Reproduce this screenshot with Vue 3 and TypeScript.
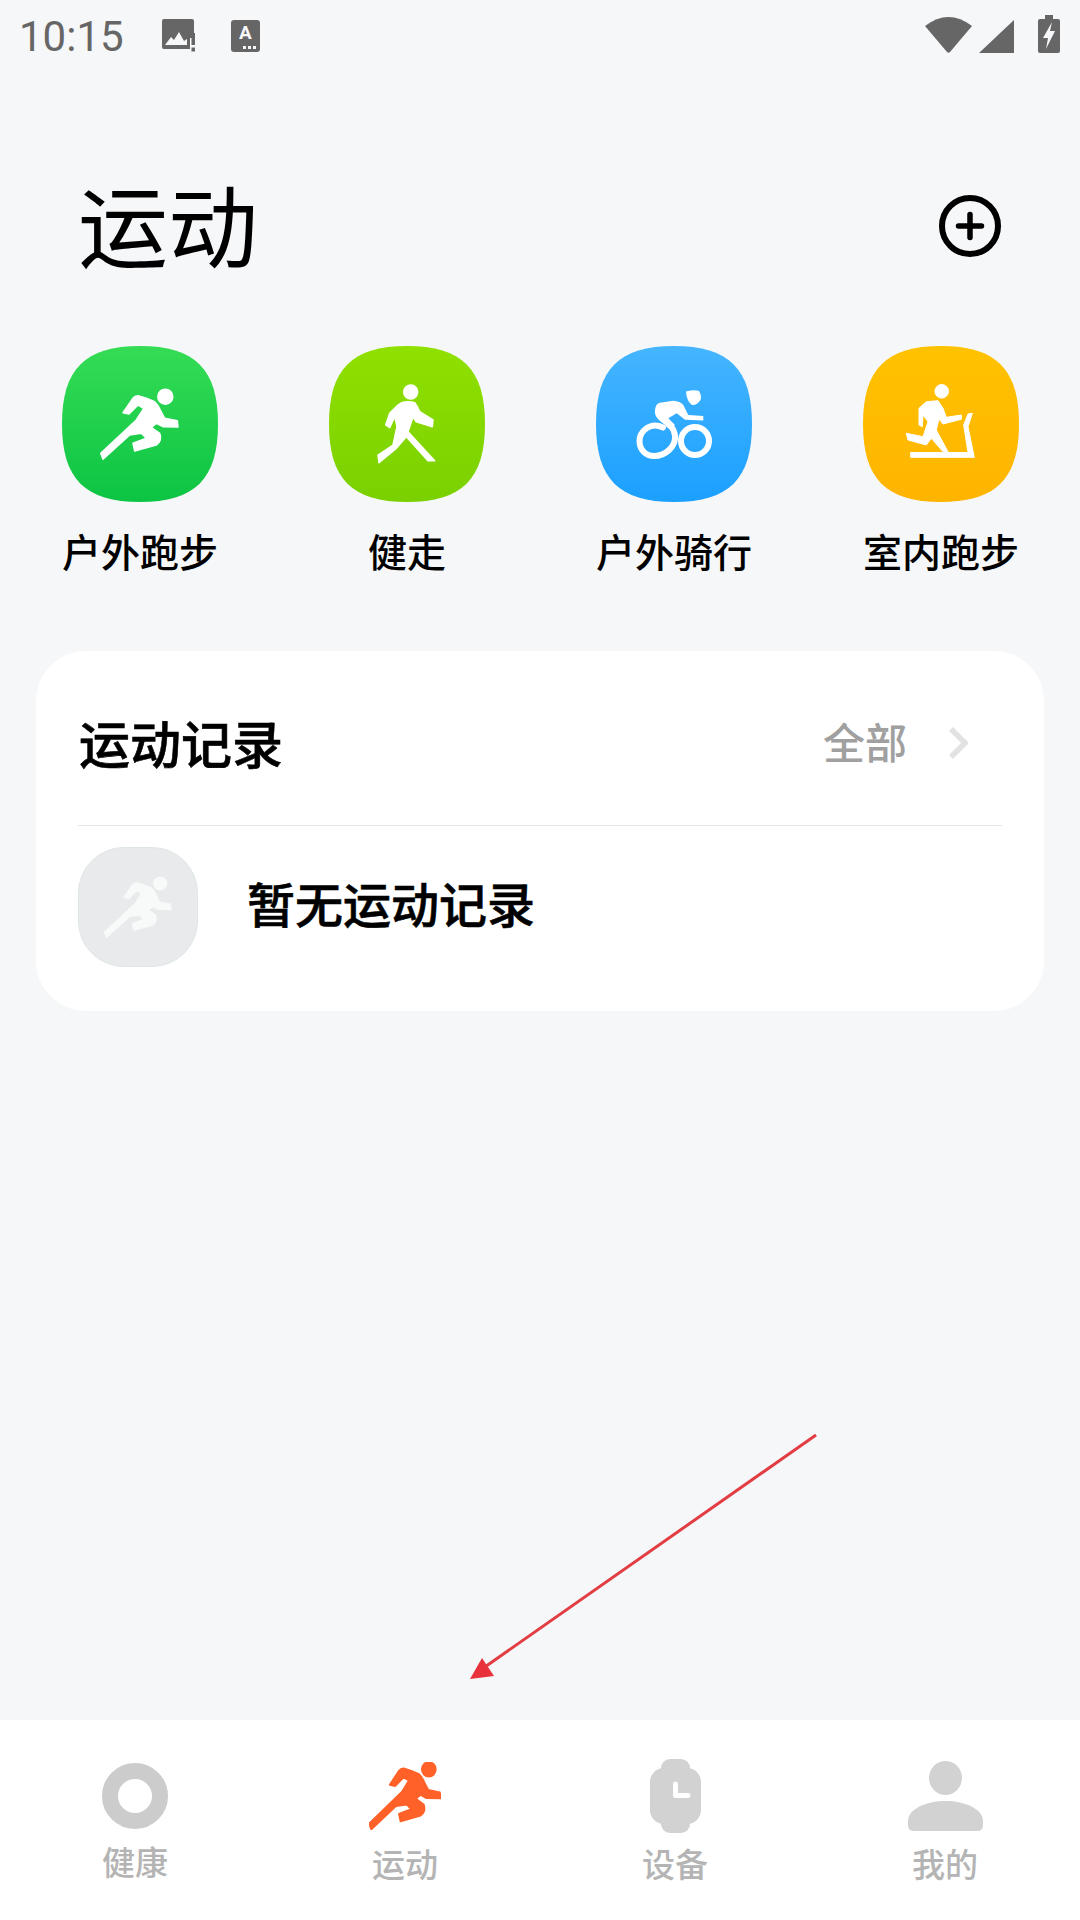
<script setup lang="ts">
interface Shape {
  name: string
  from: string
  to: string
  art: string
}

// Runner outline, drawn in the 156px tile's coordinates
const runner =
  'M61 66.7 71 52.3Q73 49.5 76 49.7L84.3 52.3 92.7 55.7Q96.5 59 98.3 64L102.7 72.3 115.3 74.7 116 81 101 80.7 94.3 77.3 89.3 81.3 97.7 87.3Q99 90 98.3 94 97 97.5 94.3 99L72.7 105 71 97.3 84.3 92.3 79.3 87.3 67.7 89 41 113.3 38.7 107.3 74.3 74 81.7 62.3 76 59 67 68Z'
const runnerHead = { cx: 103.3, cy: 50.7, r: 7.5 }

const sports: Shape[] = [
  { name: '户外跑步', from: '#35dc55', to: '#0cc443', art: 'run' },
  { name: '健走', from: '#90e000', to: '#7ad000', art: 'walk' },
  { name: '户外骑行', from: '#45b5ff', to: '#1ba0ff', art: 'bike' },
  { name: '室内跑步', from: '#ffc200', to: '#ffb400', art: 'tread' }
]

const tileShape = 'M78 0C133 0 156 23 156 78 156 133 133 156 78 156 23 156 0 133 0 78 0 23 23 0 78 0Z'
</script>

<template>
  <div class="page">
    <div class="status">
      <span class="time">10:15</span>
      <svg class="st-image" viewBox="0 0 34 34" width="34" height="34">
        <path d="M2 0H30Q32 0 32 2V19H28V30H2Q0 30 0 28V2Q0 0 2 0Z" fill="#666" />
        <path d="M3 26 9 18 12 21 17 13 22 22 25 20V26Z" fill="#f6f7f9" />
        <rect x="29.5" y="14" width="3.5" height="12" fill="#666" />
        <rect x="29.5" y="28.5" width="3.5" height="4" fill="#666" />
      </svg>
      <div class="st-letter">
        <span>A</span>
        <i></i>
      </div>
      <div class="status-right">
        <svg viewBox="0 0 47 36" width="47" height="36">
          <path d="M0 9Q23.500-9 47 9L25 35Q23.500 36.500 22 35Z" fill="#666" />
        </svg>
        <svg viewBox="0 0 35 33" width="35" height="33">
          <path d="M35 0V33H0Z" fill="#666" />
        </svg>
        <svg viewBox="0 0 22 38" width="22" height="38">
          <path d="M7 0H15V4H20Q22 4 22 6V36Q22 38 20 38H2Q0 38 0 36V6Q0 4 2 4H7Z" fill="#666" />
          <path d="M14 7 5 23H10L8 34 17 16H12Z" fill="#f6f7f9" />
        </svg>
      </div>
    </div>

    <header class="head">
      <h1>运动</h1>
      <svg class="plus" viewBox="0 0 62 62" width="62" height="62">
        <circle cx="31" cy="31" r="28" fill="none" stroke="#000" stroke-width="6" />
        <path d="M31 19.500V42.500M19.500 31H42.500" fill="none" stroke="#000" stroke-width="5.500" stroke-linecap="round" />
      </svg>
    </header>

    <section class="sports">
      <div v-for="(s, i) in sports" :key="s.name" class="sport">
        <svg viewBox="0 0 156 156" width="156" height="156">
          <defs>
            <linearGradient :id="`tile${i}`" x1="0" y1="0" x2="0" y2="1">
              <stop offset="0" :stop-color="s.from" />
              <stop offset="1" :stop-color="s.to" />
            </linearGradient>
          </defs>
          <path :d="tileShape" :fill="`url(#tile${i})`" />
          <g v-if="s.art === 'run'" class="fat">
            <path :d="runner" />
            <circle v-bind="runnerHead" />
          </g>
          <g v-else-if="s.art === 'walk'" class="fat">
            <circle cx="81.700" cy="46" r="7" />
            <path d="M60.700 67.300 69 59Q73 55.700 77.300 55.700 83 55.500 85.700 56.700 88.500 60 90.700 65.700L104 74 103.300 80.700 87.300 75.700 84 71 79 85.700 105.700 114.700 99 114.700 77.300 90.700 67.300 102.300 50 116.700 49 109 64 99 68 80.700 65.700 70.700 60.700 81.700 56.700 79Z" />
          </g>
          <g v-else-if="s.art === 'bike'">
            <path d="M90 45.500Q98 43.500 103 45 106 50 104.500 54 101 59.500 96 59 90.500 55 90 45.500Z" fill="#fff" />
            <path d="M59 64Q59.500 57.700 64 56.700L77.300 54.700Q84 55 87.300 59L92.300 69 107.300 70V74.500L89 73.800 80.700 67.300 72.300 72.300 79 79 74 83 64 75Q58 70 59 64Z" fill="#fff" />
            <circle cx="99" cy="95" r="14" fill="none" stroke="#fff" stroke-width="6" />
            <path d="M67 81.500C54 75 43.500 86 43.500 95 43.500 104 50 110 58 110 70 110 80 100 79 90 78.500 85 76 81 73 79" fill="none" stroke="#fff" stroke-width="6" stroke-linecap="round" />
          </g>
          <g v-else class="fat slim">
            <circle cx="78.700" cy="45.300" r="6.800" />
            <path d="M56 62.300 63.300 55.700 75 54.700 80 62.300 83.300 71.300 98.300 69V73.300L80 78 76 73 73.300 84 85 105.700H80L68.300 92.300 63.300 99 45 94 43.300 87.300 60 90.700 65 75.700 60 69 59.300 80.700 56 79Z" />
            <path d="M47.700 106.500H105L100.700 79 105 68 109.300 67.300 105 80.700 111.300 111.300H47.700Z" />
          </g>
        </svg>
        <span class="sport-name">{{ s.name }}</span>
      </div>
    </section>

    <section class="card">
      <div class="card-head">
        <h2>运动记录</h2>
        <span class="all">全部</span>
        <svg class="chev" viewBox="0 0 20 32" width="20" height="32">
          <path d="M3 2 17 16 3 30" fill="none" stroke="#e2e2e2" stroke-width="5.500" />
        </svg>
      </div>
      <div class="record">
        <div class="record-icon">
          <svg viewBox="38 42 79 72" width="68" height="62">
            <g fill="#f8f9f9" stroke="#f8f9f9" stroke-width="1.500" stroke-linejoin="round">
              <path :d="runner" />
              <circle v-bind="runnerHead" />
            </g>
          </svg>
        </div>
        <span>暂无运动记录</span>
      </div>
    </section>

    <div class="grow"></div>

    <nav class="tabs">
      <div class="tab health">
        <div class="tab-icon">
          <svg viewBox="0 0 66 66" width="66" height="66">
            <circle cx="33" cy="33" r="25" fill="none" stroke="#ccc" stroke-width="16" />
          </svg>
        </div>
        <span>健康</span>
      </div>
      <div class="tab">
        <div class="tab-icon">
          <svg viewBox="38.500 43 78 71" width="72" height="68" preserveAspectRatio="none">
            <g fill="#ff6128" stroke="#ff6128" stroke-width="2" stroke-linejoin="round">
              <path :d="runner" />
              <circle v-bind="runnerHead" />
            </g>
          </svg>
        </div>
        <span>运动</span>
      </div>
      <div class="tab">
        <div class="tab-icon">
          <svg viewBox="0 0 51 74" width="51" height="74">
            <rect x="11" width="29" height="74" rx="9" fill="#d2d2d2" />
            <rect y="9" width="51" height="56" rx="14" fill="#d2d2d2" />
            <path d="M25.500 25V36.500H38" fill="none" stroke="#fff" stroke-width="5" stroke-linecap="round" stroke-linejoin="round" />
          </svg>
        </div>
        <span>设备</span>
      </div>
      <div class="tab">
        <div class="tab-icon">
          <svg viewBox="0 0 75 70" width="75" height="70">
            <ellipse cx="37.500" cy="17" rx="16.500" ry="17" fill="#d2d2d2" />
            <path d="M0 60C0 48 18 40 37.500 40 57 40 75 48 75 60V64Q75 70 69 70H6Q0 70 0 64Z" fill="#d2d2d2" />
          </svg>
        </div>
        <span>我的</span>
      </div>
    </nav>

    <!-- annotation lying over the page -->
    <svg class="arrow" viewBox="0 0 1080 1920" width="1080" height="1920">
      <path d="M816 1435 482 1669" fill="none" stroke="#e23d43" stroke-width="3" />
      <path d="M470 1679 482 1658 494 1676Z" fill="#e8323c" />
    </svg>
  </div>
</template>

<style>
html,
body {
  margin: 0;
  background: #f6f7f9;
}
</style>

<style scoped>
.page {
  position: relative;
  width: 1080px;
  height: 1920px;
  display: flex;
  flex-direction: column;
  background: #f6f7f9;
  font-family: "Noto Sans CJK SC", "Noto Sans", sans-serif;
  color: #000;
  overflow: hidden;
}

.status {
  height: 70px;
  box-sizing: border-box;
  padding: 2px 20px 0 19px;
  display: flex;
  align-items: center;
  color: #666;
}

.time {
  font: 400 42px/42px Roboto, sans-serif;
  width: 143px;
  margin-top: 2px;
}

.st-image {
  margin-right: 35px;
}

.st-letter {
  position: relative;
  width: 29px;
  height: 32px;
  border-radius: 3px;
  background: #666;
  color: #f6f7f9;
  font: 700 19px/26px Roboto, sans-serif;
  text-align: center;
}

.st-letter span {
  display: block;
}

.st-letter i {
  position: absolute;
  right: 4px;
  bottom: 3px;
  width: 3px;
  height: 3px;
  background: #f6f7f9;
  box-shadow: -5px 0 #f6f7f9, -10px 0 #f6f7f9;
}

.status-right {
  margin-left: auto;
  margin-bottom: 4px;
  display: flex;
  align-items: flex-end;
  gap: 7px;
  height: 38px;
}

.status-right svg:last-child {
  margin-left: 17px;
}

.head {
  margin-top: 97px;
  height: 110px;
  margin-bottom: 3px;
  padding: 0 79px 0 78px;
  display: flex;
  align-items: center;
  justify-content: space-between;
}

.plus {
  position: relative;
  top: 4px;
}

h1 {
  margin: 0;
  font-size: 90px;
  font-weight: 400;
  line-height: 110px;
}

.sports {
  margin-top: 66px;
  padding: 0 61px 0 62px;
  display: flex;
  justify-content: space-between;
}

.sport {
  width: 156px;
  display: flex;
  flex-direction: column;
  align-items: center;
}

.sport svg {
  display: block;
}

.fat {
  fill: #fff;
  stroke: #fff;
  stroke-width: 1.5;
  stroke-linejoin: round;
}

.slim {
  stroke-width: 1;
}

.sport-name {
  margin-top: 23px;
  margin-bottom: 3px;
  font-size: 39px;
  font-weight: 500;
  line-height: 50px;
  white-space: nowrap;
}

.card {
  margin: 73px 36px 0;
  padding: 0 42px;
  height: 360px;
  box-sizing: border-box;
  border-radius: 50px;
  background: #fff;
}

.card-head {
  height: 175px;
  box-sizing: border-box;
  padding: 7px 34px 0 1px;
  display: flex;
  align-items: center;
  border-bottom: 1px solid #e6e6e6;
}

h2 {
  margin: 0;
  font-size: 51px;
  font-weight: 500;
  -webkit-text-stroke: 0.6px #000;
  line-height: 70px;
  flex: 1;
}

.all {
  position: relative;
  top: -1px;
  font-size: 42px;
  font-weight: 500;
  line-height: 60px;
  color: #a0a0a0;
}

.chev {
  position: relative;
  top: 1px;
  margin-left: 41px;
}

.record {
  padding-top: 21px;
  display: flex;
  align-items: center;
  gap: 49px;
  font-size: 48px;
  font-weight: 500;
  -webkit-text-stroke: 0.6px #000;
  line-height: 60px;
}

.record span {
  position: relative;
  top: -5px;
}

.record-icon {
  width: 120px;
  height: 120px;
  box-sizing: border-box;
  border-radius: 46px;
  border: 1px solid #dfe6e6;
  background: #e8eaec;
  display: flex;
  align-items: center;
  justify-content: center;
}

.grow {
  flex: 1;
}

.tabs {
  height: 200px;
  box-sizing: border-box;
  padding-top: 39px;
  background: #fff;
  display: grid;
  grid-template-columns: repeat(4, 1fr);
}

.tab {
  display: flex;
  flex-direction: column;
  align-items: center;
  font-size: 33px;
  font-weight: 500;
  line-height: 44px;
  color: #b4b4b4;
}

.tab-icon {
  height: 74px;
  margin-bottom: 8px;
  display: flex;
  align-items: center;
  justify-content: center;
}

.tab.health .tab-icon {
  margin-bottom: 6px;
}

.arrow {
  position: absolute;
  inset: 0;
  pointer-events: none;
}
</style>
